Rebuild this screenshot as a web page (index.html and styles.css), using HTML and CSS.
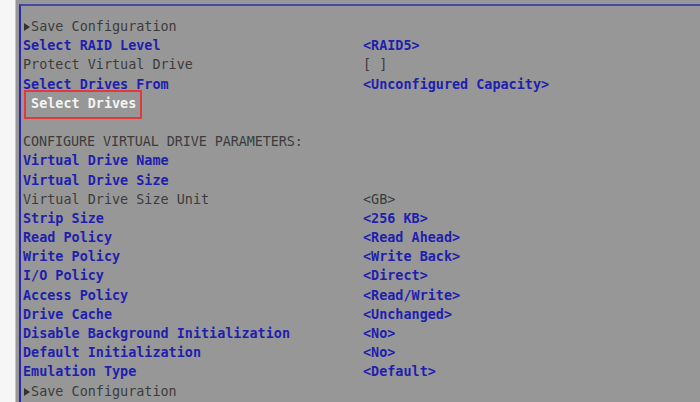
FILE: index.html
```html
<!DOCTYPE html>
<html lang="en">
<head>
<meta charset="UTF-8">
<meta name="viewport" content="width=device-width, initial-scale=1.0">
<title>Create Virtual Drive</title>
<link rel="stylesheet" href="styles.css">
</head>
<body>
<div class="gutter"></div>
<div class="screen">
  <div class="frame">
    <div class="row"><span class="label dim"><i class="arrow"></i>Save Configuration</span><span></span></div>
    <div class="row"><span class="label">Select RAID Level</span><span class="value">&lt;RAID5&gt;</span></div>
    <div class="row"><span class="label dim">Protect Virtual Drive</span><span class="value dim">[ ]</span></div>
    <div class="row"><span class="label">Select Drives From</span><span class="value">&lt;Unconfigured Capacity&gt;</span></div>
    <div class="row"><span class="label selected"><i class="cursor"></i><span class="marked">Select Drives</span></span><span></span></div>
    <div class="row"><span>&nbsp;</span><span></span></div>
    <div class="row"><span class="label dim head">CONFIGURE VIRTUAL DRIVE PARAMETERS:</span><span></span></div>
    <div class="row"><span class="label">Virtual Drive Name</span><span></span></div>
    <div class="row"><span class="label">Virtual Drive Size</span><span></span></div>
    <div class="row"><span class="label dim">Virtual Drive Size Unit</span><span class="value dim">&lt;GB&gt;</span></div>
    <div class="row"><span class="label">Strip Size</span><span class="value">&lt;256 KB&gt;</span></div>
    <div class="row"><span class="label">Read Policy</span><span class="value">&lt;Read Ahead&gt;</span></div>
    <div class="row"><span class="label">Write Policy</span><span class="value">&lt;Write Back&gt;</span></div>
    <div class="row"><span class="label">I/O Policy</span><span class="value">&lt;Direct&gt;</span></div>
    <div class="row"><span class="label">Access Policy</span><span class="value">&lt;Read/Write&gt;</span></div>
    <div class="row"><span class="label">Drive Cache</span><span class="value">&lt;Unchanged&gt;</span></div>
    <div class="row"><span class="label">Disable Background Initialization</span><span class="value">&lt;No&gt;</span></div>
    <div class="row"><span class="label">Default Initialization</span><span class="value">&lt;No&gt;</span></div>
    <div class="row"><span class="label">Emulation Type</span><span class="value">&lt;Default&gt;</span></div>
    <div class="row"><span class="label dim"><i class="arrow"></i>Save Configuration</span><span></span></div>
  </div>
</div>
</body>
</html>
```
FILE: styles.css
```css
body {
  margin: 0;
  height: 402px;
  overflow: hidden;
  display: flex;
  font-family: "DejaVu Sans Mono", "Liberation Mono", monospace;
  font-size: 13.45px;
  background-color: #979797;
}

.gutter {
  width: 15px;
  background-color: #f6f6f6;
  border-right: 1px solid #c4c4c4;
}

.screen {
  flex: 1;
  padding: 4px 0 0 3px;
  background-color: #979797;
}

.frame {
  border-top: 2px solid #4848a4;
  border-left: 2px solid #2a2aa8;
  padding: 11px 0 0 2px;
  height: 400px;
}

.row {
  display: grid;
  grid-template-columns: 340px auto;
  line-height: 19.2px;
  height: 19.2px;
  white-space: pre;
}

.label, .value {
  color: #1f1fae;
  font-weight: bold;
}

.dim, .label.dim, .value.dim {
  color: #3c3c3c;
  font-weight: normal;
}

.head {
  color: #444;
  letter-spacing: -0.1px;
}

.arrow {
  display: inline-block;
  width: 8.1px;
  height: 10px;
  position: relative;
  vertical-align: -1px;
}

.arrow::before {
  content: "";
  position: absolute;
  left: 1px;
  top: 1px;
  border-left: 6px solid #333;
  border-top: 4px solid transparent;
  border-bottom: 4px solid transparent;
}

.cursor {
  display: inline-block;
  width: 8.1px;
  height: 11px;
  position: relative;
  vertical-align: -1px;
}

.cursor::before {
  content: "";
  position: absolute;
  left: 1px;
  top: 0;
  width: 1px;
  height: 9px;
  background-color: #ddd;
}

.selected .marked {
  color: #f4f4f4;
  font-weight: bold;
  position: relative;
}

.marked::after {
  content: "";
  position: absolute;
  left: -7px;
  right: -6px;
  top: -6px;
  bottom: -8px;
  border: 2px solid #e23a3a;
}
```
